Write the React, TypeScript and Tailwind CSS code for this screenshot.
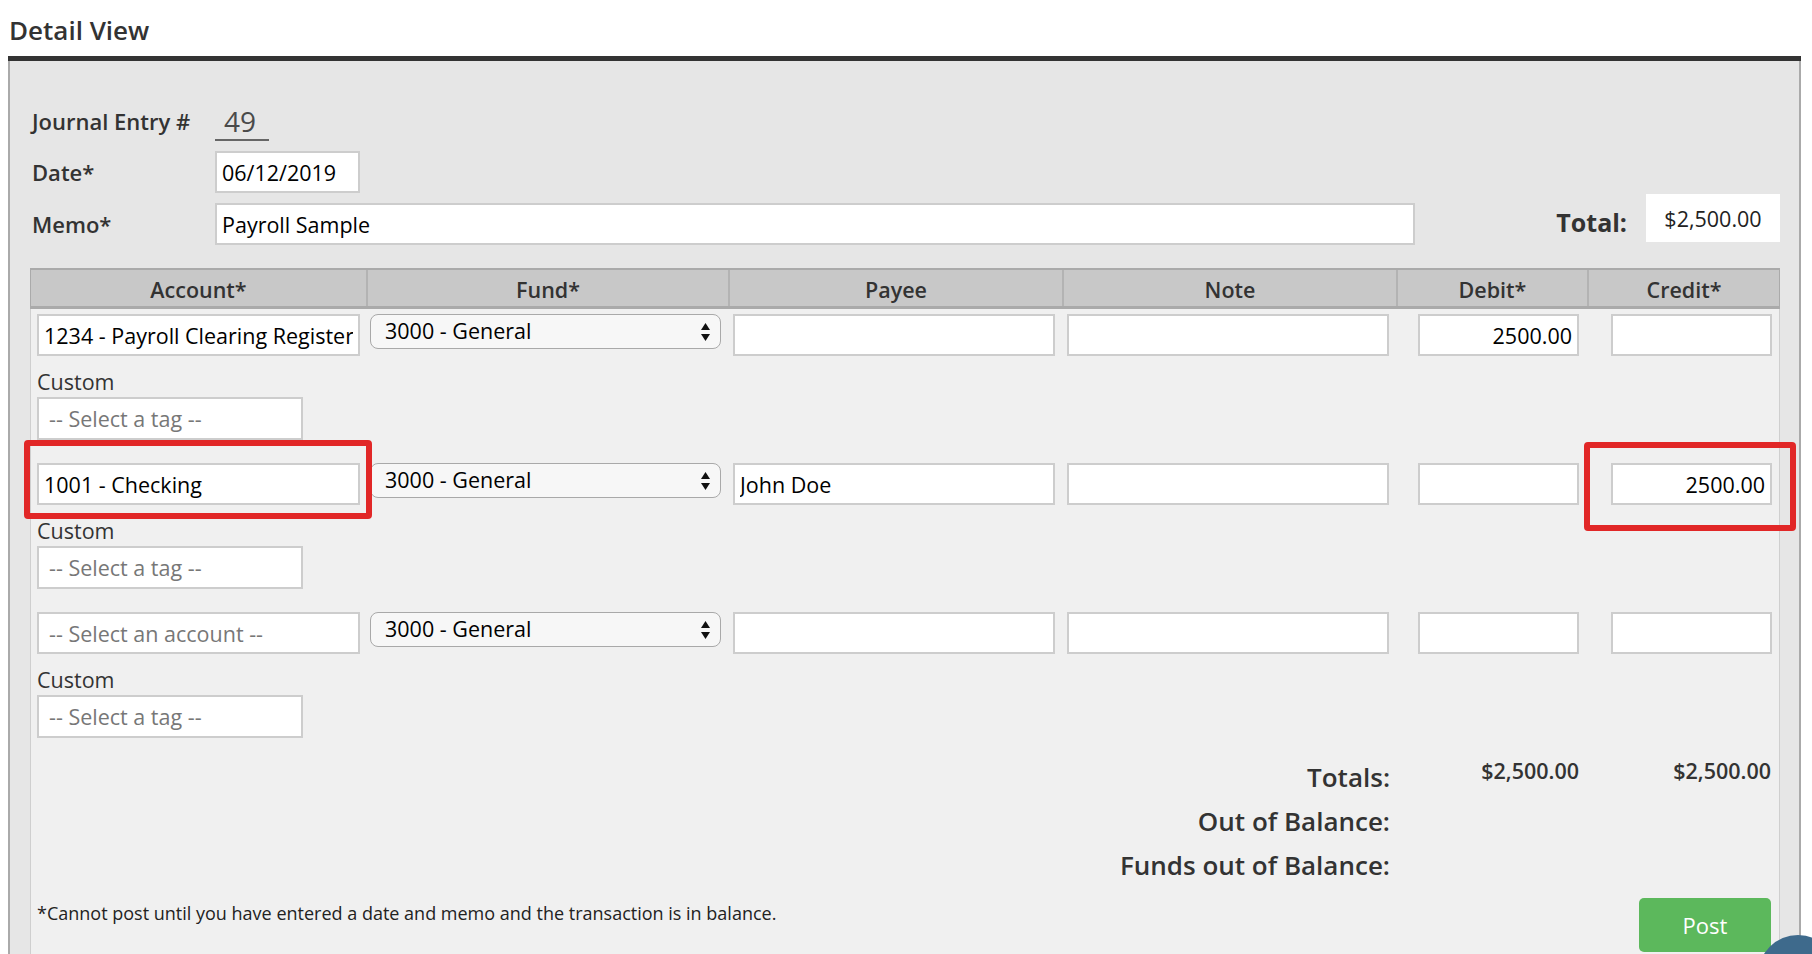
import type { ReactNode } from 'react';

const gridCols = 'grid grid-cols-[335px_362px_334px_334px_191px_192px]';

function TextBox({
	value,
	placeholder,
	className,
	align = 'left',
}: {
	value?: string;
	placeholder?: string;
	className: string;
	align?: 'left' | 'right';
}) {
	return (
		<input
			readOnly
			value={value ?? ''}
			placeholder={placeholder}
			className={`h-[42px] border-2 border-[#cdcdcd] bg-white px-[5px] text-[21.5px] text-black outline-none placeholder:text-[#777] ${
				align === 'right' ? 'text-right' : ''
			} ${value ? '' : 'pl-[10px]'} ${className}`}
		/>
	);
}

function FundSelect() {
	return (
		<div className="flex h-[35px] w-[351px] items-center justify-between rounded-[8px] border-[1.5px] border-[#a9a9a9] bg-[#f7f7f7] pl-[14px] pr-[10px] text-[21.5px] text-black">
			<span>3000 - General</span>
			<svg width="9" height="18" viewBox="0 0 9 18">
				<polygon points="0,7 4.5,0 9,7" fill="#111" />
				<polygon points="0,11 4.5,18 9,11" fill="#111" />
			</svg>
		</div>
	);
}

type Line = {
	account?: string;
	payee?: string;
	debit?: string;
	credit?: string;
	highlight?: boolean;
};

const lines: Line[] = [
	{ account: '1234 - Payroll Clearing Register', debit: '2500.00' },
	{ account: '1001 - Checking', payee: 'John Doe', credit: '2500.00', highlight: true },
	{},
];

function Highlight({ className }: { className: string }) {
	return <div className={`pointer-events-none absolute rounded-[4px] border-[6px] border-[#e12727] ${className}`} />;
}

function EntryRow({ line, first }: { line: Line; first: boolean }) {
	return (
		<div className={`${gridCols} items-start ${first ? '' : 'mt-[23px]'}`}>
			<div className="relative flex flex-col pl-[6px]">
				<TextBox
					value={line.account}
					placeholder="-- Select an account --"
					className="w-[323px]"
				/>
				{line.highlight && <Highlight className="-left-[7px] -top-[23px] h-[79px] w-[348px]" />}
				<div className="pt-[11px] text-[21.5px] leading-[29px] text-[#333]">Custom</div>
				<TextBox placeholder="-- Select a tag --" className="mt-[1px] h-[43px] w-[266px]" />
			</div>
			<div className="pl-[4px]">
				<FundSelect />
			</div>
			<div className="pl-[5px]">
				<TextBox value={line.payee} className="w-[322px]" />
			</div>
			<div className="pl-[5px]">
				<TextBox className="w-[322px]" />
			</div>
			<div className="pl-[22px]">
				<TextBox value={line.debit} align="right" className="w-[161px]" />
			</div>
			<div className="relative pl-[24px]">
				<TextBox value={line.credit} align="right" className="w-[161px]" />
				{line.highlight && <Highlight className="-left-[3px] -top-[21px] h-[89px] w-[212px]" />}
			</div>
		</div>
	);
}

function HeaderCell({ children, first }: { children: ReactNode; first?: boolean }) {
	return (
		<div
			className={`flex items-center justify-center pt-[4px] text-[21.5px] font-semibold text-[#333] ${
				first ? '' : 'border-l-2 border-[#b3b3b3]'
			}`}
		>
			{children}
		</div>
	);
}

function FormLabel({ children }: { children: ReactNode }) {
	return <div className="w-[183px] text-[22px] font-semibold text-[#333]">{children}</div>;
}

export default function App() {
	return (
		<div className="relative h-[954px] overflow-hidden bg-white font-['Open_Sans',sans-serif] text-[#333]">
			<div className="h-[56px] pl-[9px] pt-[14px] text-[26px] font-semibold leading-[32px] text-[#333]">
				Detail View
			</div>
			<div className="ml-[8px] h-[5px] w-[1793px] bg-[#333]" />
			<div className="ml-[8px] flex h-[893px] w-[1793px] flex-col border-x-2 border-[#aaa] bg-[#e6e6e6]">
				<div className="pl-[22px] pr-[19px] pt-[41px]">
					<div className="flex h-[39px] items-center">
						<FormLabel>Journal Entry #</FormLabel>
						<div className="flex h-[39px] w-[54px] items-center border-b-2 border-[#666] pl-[9px] text-[28px] text-[#4a4a4a]">
							49
						</div>
					</div>
					<div className="mt-[10px] flex h-[42px] items-center">
						<FormLabel>Date*</FormLabel>
						<TextBox value="06/12/2019" className="w-[145px]" />
					</div>
					<div className="mt-[10px] flex h-[42px] items-center">
						<FormLabel>Memo*</FormLabel>
						<TextBox value="Payroll Sample" className="w-[1200px]" />
						<div className="-mt-[9px] ml-auto flex h-[48px] items-center self-start">
							<span className="pt-[10px] text-[25px] font-bold text-[#333]">Total:</span>
							<div className="ml-[19px] flex h-[48px] w-[134px] items-center justify-center bg-white pt-[3px] text-[21.5px] text-[#222]">
								$2,500.00
							</div>
						</div>
					</div>
				</div>

				<div className="ml-[20px] mt-[23px] flex w-[1750px] flex-1 flex-col">
					<div className={`${gridCols} h-[41px] border-x border-b-[3px] border-t-2 border-[#aaa] bg-[#c8c8c8]`}>
						<HeaderCell first>Account*</HeaderCell>
						<HeaderCell>Fund*</HeaderCell>
						<HeaderCell>Payee</HeaderCell>
						<HeaderCell>Note</HeaderCell>
						<HeaderCell>Debit*</HeaderCell>
						<HeaderCell>Credit*</HeaderCell>
					</div>
					<div className="flex-1 border-x border-[#cfcfcf] bg-[#f0f0f0] pt-[5px]">
						{lines.map((line, i) => (
							<EntryRow key={i} line={line} first={i === 0} />
						))}

						<div className={`${gridCols} mt-[17px] items-start`}>
							<div className="col-span-4 pr-[6px] text-right text-[26px] font-semibold leading-[44px] text-[#333]">
								Totals:
							</div>
							<div className="pr-[8px] text-right text-[21.5px] font-semibold leading-[32px] text-[#333]">
								$2,500.00
							</div>
							<div className="pr-[8px] text-right text-[21.5px] font-semibold leading-[32px] text-[#333]">
								$2,500.00
							</div>
							<div className="col-span-4 pr-[6px] text-right text-[26px] font-semibold leading-[44px] text-[#333]">
								Out of Balance:
							</div>
							<div />
							<div />
							<div className="col-span-4 pr-[6px] text-right text-[26px] font-semibold leading-[44px] text-[#333]">
								Funds out of Balance:
							</div>
						</div>

						<div className="mt-[11px] flex items-start pl-[6px] pr-[8px]">
							<div className="pt-[3px] text-[18px] leading-[24px] text-[#222]">
								*Cannot post until you have entered a date and memo and the transaction is in balance.
							</div>
							<button className="ml-auto h-[54px] w-[132px] rounded-[5px] bg-[#5cb85c] text-[22px] text-white">
								Post
							</button>
						</div>
					</div>
				</div>
			</div>
			<div className="fixed left-[1758px] top-[935px] h-[80px] w-[80px] rounded-full bg-[#3e6a8c]" />
		</div>
	);
}
